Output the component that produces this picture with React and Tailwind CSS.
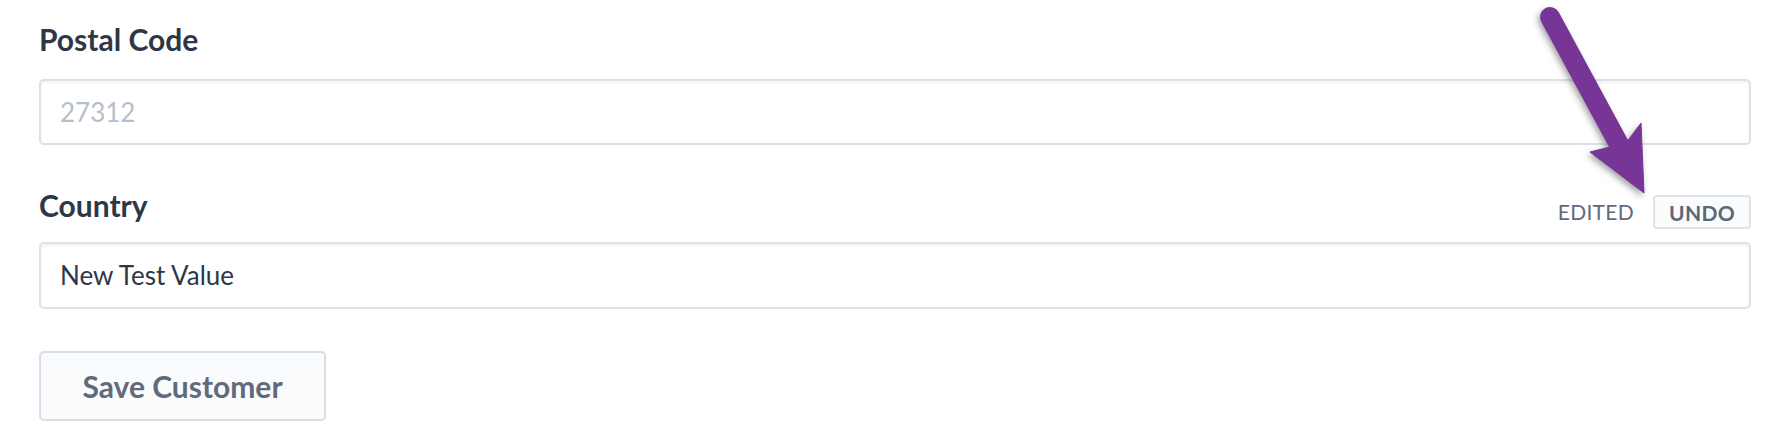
import React from "react";

function Arrow() {
  return (
    <svg
      className="absolute left-0 top-0 pointer-events-none"
      width="1772"
      height="444"
      viewBox="0 0 1772 444"
    >
      <defs>
        <filter id="sh" x="-20%" y="-20%" width="140%" height="140%">
          <feDropShadow dx="-2" dy="3" stdDeviation="3" floodColor="#555" floodOpacity="0.55" />
        </filter>
      </defs>
      <g filter="url(#sh)" fill="#773597" stroke="#773597">
        <line x1="1550" y1="17" x2="1622" y2="150" strokeWidth="20" strokeLinecap="round" />
        <polygon points="1590,152 1644,193 1641,123 1626,143" strokeWidth="1" strokeLinejoin="miter" />
      </g>
    </svg>
  );
}

export default function App() {
  const font = { fontFamily: '"Lato", "Open Sans", sans-serif' };
  return (
    <div className="relative w-[1772px] h-[444px] bg-white overflow-hidden" style={font}>
      <div className="flex flex-col pl-[39px] pr-[21px] pt-[21px]">
        <div className="h-[36px] text-[30px] leading-[36px] font-bold text-[#2d3748]">Postal Code</div>
        <div className="mt-[22px] h-[66px] rounded-[5px] border-2 border-[#dbe1e9] bg-white shadow-[inset_0_2px_3px_rgba(0,0,0,0.05)] flex items-center pl-[19px] text-[26px] text-[#b4bfcc]">
          27312
        </div>
        <div className="mt-[42px] flex items-start justify-between">
          <div className="h-[36px] text-[30px] leading-[36px] font-bold text-[#2d3748]">Country</div>
          <div className="mt-[8px] flex items-center gap-[19px]">
            <span className="text-[21px] tracking-[0.3px] text-[#5f6b7a]">EDITED</span>
            <button className="h-[34px] w-[98px] rounded-[4px] border-2 border-[#dfe4eb] bg-[#fafbfc] text-[21px] font-bold tracking-[0.3px] text-[#5a6779]">
              UNDO
            </button>
          </div>
        </div>
        <div className="mt-[13px] h-[67px] rounded-[5px] border-2 border-[#dbe1e9] bg-white shadow-[inset_0_2px_3px_rgba(0,0,0,0.05)] flex items-center pl-[19px] text-[26px] text-[#2d3748]">
          New Test Value
        </div>
        <div className="mt-[42px]">
          <button className="h-[70px] w-[287px] rounded-[5px] border-2 border-[#d8dee7] bg-[#fafbfd] text-[30px] font-bold text-[#5f6b7b]">
            Save Customer
          </button>
        </div>
      </div>
      <Arrow />
    </div>
  );
}
